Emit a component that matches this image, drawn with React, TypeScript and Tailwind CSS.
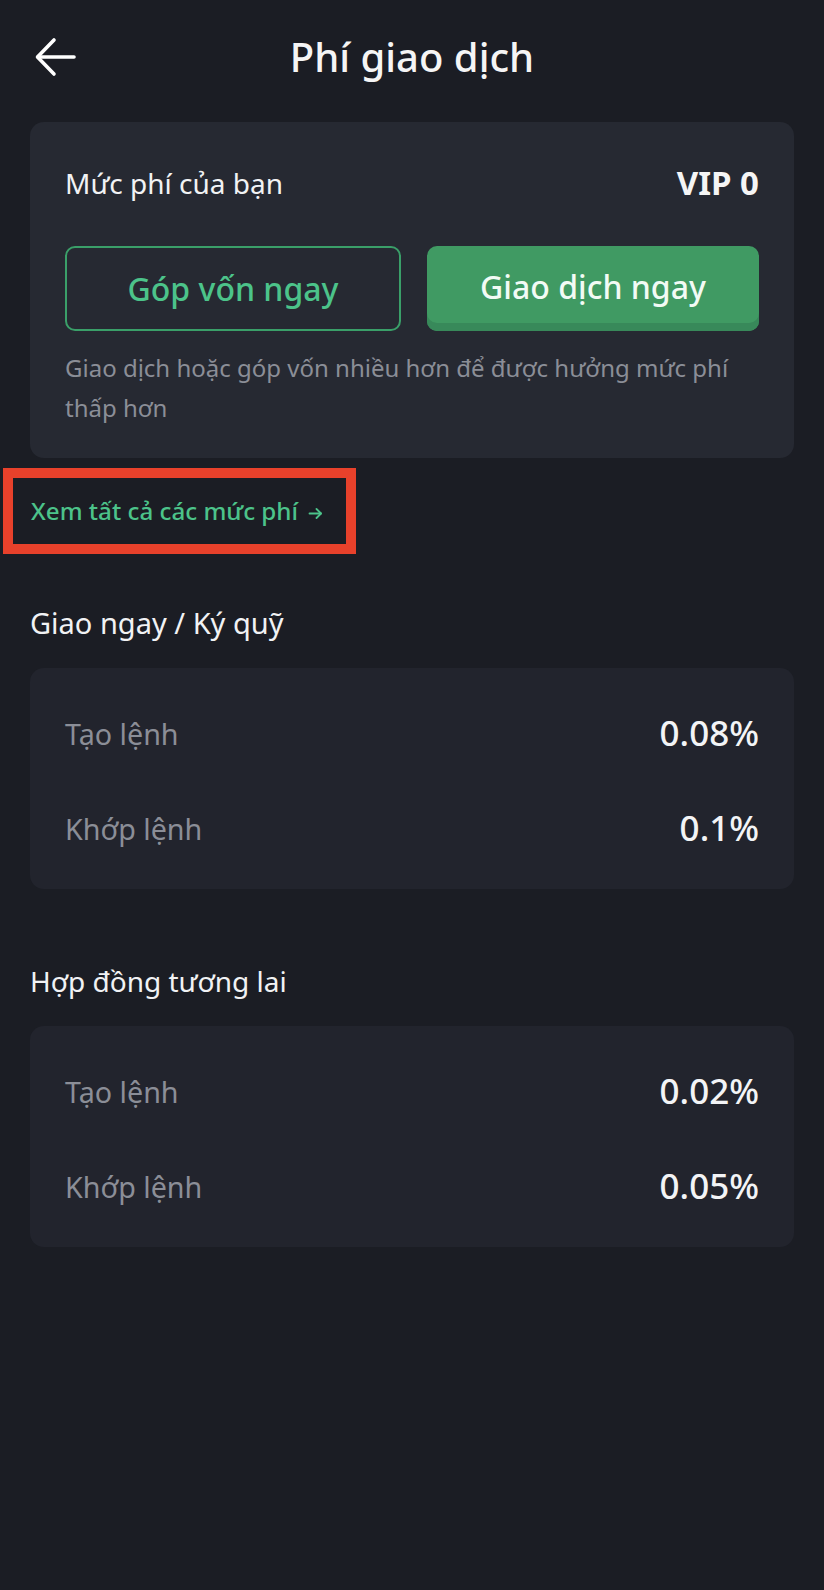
import React from "react";

const font = { fontFamily: "'Noto Sans', Roboto, sans-serif" };

function FeeCard({ maker, taker }: { maker: string; taker: string }) {
  return (
    <div className="mx-[30px] mt-[27px] h-[221px] rounded-[14px] bg-[#22242d] px-[35px] pt-[18px] pb-[14px]">
      <div className="flex h-[95px] items-center justify-between">
        <span className="text-[28.7px] text-[#8b8e97]">Tạo lệnh</span>
        <span className="text-[35px] font-medium text-[#f3f4f6]">{maker}</span>
      </div>
      <div className="flex h-[95px] items-center justify-between">
        <span className="text-[28.7px] text-[#8b8e97]">Khớp lệnh</span>
        <span className="text-[35px] font-medium text-[#f3f4f6]">{taker}</span>
      </div>
    </div>
  );
}

export default function App() {
  return (
    <div className="min-h-[1590px] w-full bg-[#1b1d24] text-white" style={font}>
      <div className="relative flex h-[114px] items-center justify-center">
        <svg
          className="absolute left-[34px] top-[36px]"
          width="44"
          height="42"
          viewBox="0 0 44 42"
          fill="none"
          stroke="#ffffff"
          strokeWidth="3.6"
          strokeLinecap="round"
          strokeLinejoin="round"
        >
          <path d="M40 21H4" />
          <path d="M20 4L3.5 21L20 38" />
        </svg>
        <span className="text-[40px] font-medium leading-none text-[#f5f5f5]">Phí giao dịch</span>
      </div>

      <div className="mx-[30px] mt-[8px] h-[336px] rounded-[14px] bg-[#262932] px-[35px] pt-[43px]">
        <div className="flex h-[36px] items-center justify-between">
          <span className="text-[28px] text-[#f1f2f4]">Mức phí của bạn</span>
          <span className="text-[33px] font-bold text-[#f5f5f5]">VIP 0</span>
        </div>
        <div className="mt-[45px] flex gap-[26px]">
          <button className="flex h-[85px] flex-1 items-center justify-center rounded-[10px] border-2 border-[#3a9f69] text-[32px] font-medium text-[#4cc38a]">
            Góp vốn ngay
          </button>
          <button className="flex h-[85px] flex-1 items-center justify-center rounded-[10px] bg-[#409a63] pb-[4px] text-[32px] font-medium text-[#f2fbf5] shadow-[inset_0_-8px_0_#38895a]">
            Giao dịch ngay
          </button>
        </div>
        <p className="mt-[17px] text-[24px] leading-[40px] text-[#8b8e97]">
          Giao dịch hoặc góp vốn nhiều hơn để được hưởng mức phí thấp hơn
        </p>
      </div>

      <div className="ml-[3px] mt-[10px] flex h-[86px] w-[353px] items-center border-[10px] border-[#e8412b] pl-[18px]">
        <span className="whitespace-nowrap text-[24.2px] font-medium text-[#4cc38a]">Xem tất cả các mức phí</span>
        <svg
          className="ml-[10px] mt-[4px]"
          width="15"
          height="13"
          viewBox="0 0 15 13"
          fill="none"
          stroke="#4cc38a"
          strokeWidth="1.8"
          strokeLinecap="round"
          strokeLinejoin="round"
        >
          <path d="M1.5 6.5H13" />
          <path d="M8.5 2L13 6.5L8.5 11" />
        </svg>
      </div>

      <div className="ml-[30px] mt-[51px] flex h-[36px] items-center text-[29px] text-[#f1f2f4]">
        Giao ngay / Ký quỹ
      </div>
      <FeeCard maker="0.08%" taker="0.1%" />

      <div className="ml-[30px] mt-[74px] flex h-[36px] items-center text-[28px] text-[#f1f2f4]">
        Hợp đồng tương lai
      </div>
      <FeeCard maker="0.02%" taker="0.05%" />
    </div>
  );
}
